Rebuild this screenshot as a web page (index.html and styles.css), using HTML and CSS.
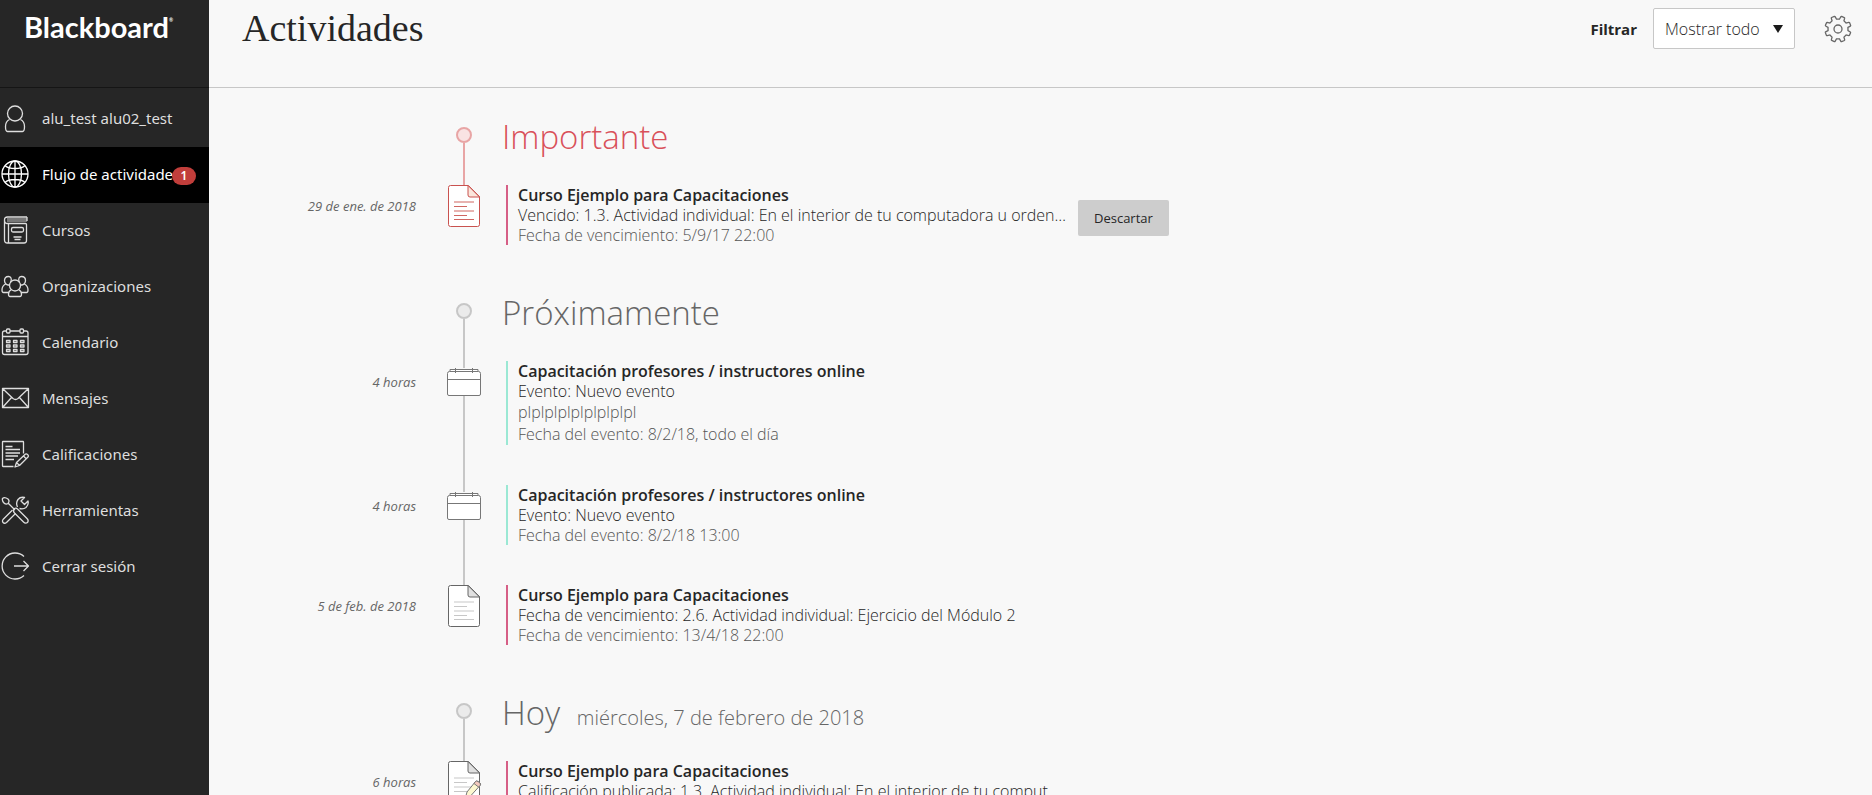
FILE: index.html
```
<!DOCTYPE html>
<html lang="es">
<head>
    <meta charset="utf-8">
    <meta name="viewport" content="width=device-width, initial-scale=1">
    <title>Actividades - Blackboard</title>
    <link rel="stylesheet" href="styles.css">
</head>
<body>
    <!-- Shared timeline icons -->
    <svg class="sprite" aria-hidden="true">
        <symbol id="icon-document" viewBox="0 0 32 42">
            <path class="paper" d="M2.5.5H20.500L31.500 11.500V39.500a2 2 0 0 1-2 2H2.500a2 2 0 0 1-2-2V2.500a2 2 0 0 1 2-2z"/>
            <path class="fold" d="M20 .500V10a2 2 0 0 0 2 2H31.500z"/>
            <path class="lines" d="M6 17H26M6 21.500H19M6 26H26M6 30.500H19M6 34.500H26"/>
        </symbol>
        <symbol id="icon-event" viewBox="0 0 34 28">
            <path class="paper" d="M3 1.500H31V3.500H3z"/>
            <path class="paper" d="M2.500 3.500H31.500a2 2 0 0 1 2 2V26a1.500 1.500 0 0 1-1.500 1.500H2A1.500 1.500 0 0 1 .500 26V5.500a2 2 0 0 1 2-2z"/>
            <path class="outline" d="M.500 11.500H33.500M8.500 0V5M25.500 0V5"/>
        </symbol>
    </svg>

    <div class="app">
        <aside class="sidebar">
            <div class="logo">Blackboard<sup>®</sup></div>
            <nav>
                <ul class="menu">
                    <li>
                        <a href="#" class="menu-item">
                            <svg class="menu-icon" viewBox="0 0 28 28"><circle cx="14" cy="9.500" r="7.500"/><path d="M8.500 15.500C5.500 17 4.500 19.500 4.500 22.500C4.500 25.500 5 27.500 6.500 27.500H21.500C23 27.500 23.500 25.500 23.500 22.500C23.500 19.500 22.500 17 19.500 15.500"/></svg>
                            <span>alu_test alu02_test</span>
                        </a>
                    </li>
                    <li>
                        <a href="#" class="menu-item active">
                            <svg class="menu-icon" viewBox="0 0 28 28"><circle cx="14" cy="14" r="13"/><ellipse cx="14" cy="14" rx="6.500" ry="13"/><path d="M14 1V27M1 14H27M4 5.500C6.500 8 10 8.500 14 8.500S21.500 8 24 5.500M4 22.500C6.500 20 10 19.500 14 19.500S21.500 20 24 22.500"/></svg>
                            <span>Flujo de actividades</span>
                            <span class="badge">1</span>
                        </a>
                    </li>
                    <li>
                        <a href="#" class="menu-item">
                            <svg class="menu-icon" viewBox="0 0 28 28"><path d="M26 1H6.500C4.500 1 3.500 2.200 3.500 4S4.500 7.500 6.500 7.500H24.500Q25.500 7.500 25.500 8.500V24.500Q25.500 27 23 27H6.500Q3.500 27 3.500 24V4M7.500 7.500V27M26 1V5"/><path d="M6 3H26M6 5H26" opacity=".6"/><rect x="10.500" y="11.500" width="12" height="4.500" rx="1.500"/><path d="M12.500 21H20.500M13.500 23.500H19.500"/></svg>
                            <span>Cursos</span>
                        </a>
                    </li>
                    <li>
                        <a href="#" class="menu-item">
                            <svg class="menu-icon" viewBox="0 0 28 28"><circle cx="14" cy="13.500" r="5.500"/><path d="M10.500 17.500Q7.500 19 7.500 22Q7.500 24.500 9 24.500H19Q20.500 24.500 20.500 22Q20.500 19 17.500 17.500M9.500 10.500C11.500 6.500 9.500 4.500 7.500 4.500C4.500 4.500 3.500 6.500 3.500 8.500C3.500 11 5.500 13 7 13H8.500M18.500 10.500C16.500 6.500 18.500 4.500 20.500 4.500C23.500 4.500 24.500 6.500 24.500 8.500C24.500 11 22.500 13 21 13H19.500M4.500 12Q1 14 1 18Q1 20.500 2.500 20.500H7.500M23.500 12Q27 14 27 18Q27 20.500 25.500 20.500H20.500"/></svg>
                            <span>Organizaciones</span>
                        </a>
                    </li>
                    <li>
                        <a href="#" class="menu-item">
                            <svg class="menu-icon" viewBox="0 0 28 28"><path d="M5.500 3H3.500Q1.500 3 1.500 5V24.500Q1.500 26.500 3.500 26.500H25Q27 26.500 27 24.500V5Q27 3 25 3H22.500M9 3H19M1.500 8.500H27"/><rect x="5.500" y="1" width="3.500" height="4" rx="1"/><rect x="19" y="1" width="3.500" height="4" rx="1"/><path d="M5.500 12.500H9V14.500H5.500zM12.500 12.500H16V14.500H12.500zM19.500 12.500H23V14.500H19.500zM5.500 17H9V19H5.500zM12.500 17H16V19H12.500zM19.500 17H23V19H19.500zM5.500 21.500H9V23.500H5.500zM12.500 21.500H16V23.500H12.500zM19.500 21.500H23V23.500H19.500z"/></svg>
                            <span>Calendario</span>
                        </a>
                    </li>
                    <li>
                        <a href="#" class="menu-item">
                            <svg class="menu-icon" viewBox="0 0 28 28"><path d="M1.500 4.500H27.500V23.500H1.500zM2 5L12 14.500Q14.500 16.500 17 14.500L27 5M2 23L10.500 13.500M27 23L18.500 13.500"/></svg>
                            <span>Mensajes</span>
                        </a>
                    </li>
                    <li>
                        <a href="#" class="menu-item">
                            <svg class="menu-icon" viewBox="0 0 28 28"><path d="M22.500 13.500V2Q22.500 1.500 22 1.500H2Q1.500 1.500 1.500 2V26Q1.500 26.500 2 26.500H12.500M4.500 6.500H11.500M4.500 9.500H19M4.500 13H19M4.500 16H17M4.500 19.500H13"/><path d="M14 27L15.500 22.500L24.500 14Q25.500 13.500 26.500 14.500L27 15Q28 16 27 17L18.500 25.500zM15.500 22.500L18.500 25.500M22.500 16L25 18.500"/></svg>
                            <span>Calificaciones</span>
                        </a>
                    </li>
                    <li>
                        <a href="#" class="menu-item">
                            <svg class="menu-icon" viewBox="0 0 28 28"><path d="M1.500 2.500Q3.500 .500 7 3Q9 5 7 7.500Q4.500 9 2.500 6.500Q1 4.500 1.500 2.500zM7.500 7.500L14 14M11.500 14L2 23.500Q1 25 2 26.500Q3.500 28 5.500 26.500L14.500 17.500"/><path d="M13.500 12.500Q15 11.500 16.500 13L26 22.500Q28 24.500 26.500 26.500Q24.500 28 22.500 26L13.500 17Q11.500 15 13.500 12.500zM16.500 11Q14.500 7 17 3.500Q19.500 .500 23.500 1.500L20 5L23.500 8.500L27 5Q28 8.500 25 11.500Q22.500 13.500 18.500 12.500"/></svg>
                            <span>Herramientas</span>
                        </a>
                    </li>
                    <li>
                        <a href="#" class="menu-item">
                            <svg class="menu-icon" viewBox="0 0 28 28"><path d="M23 4.500A13 13 0 1 0 23 23.500M13 14H27.500M22.500 9L27.500 14L22.500 19"/></svg>
                            <span>Cerrar sesión</span>
                        </a>
                    </li>
                </ul>
            </nav>
        </aside>

        <div class="page">
            <header class="page-header">
                <h1>Actividades</h1>
                <div class="filter">
                    <label for="filter">Filtrar</label>
                    <div class="select">
                        <select id="filter">
                            <option>Mostrar todo</option>
                        </select>
                    </div>
                    <button type="button" class="settings" aria-label="Configuración">
                        <svg viewBox="0 0 28 28"><circle cx="14" cy="14" r="4"/><path d="M11.600 4.200L12 1.500Q12.100 1 12.600 1H15.400Q15.900 1 16 1.500L16.400 4.200L19.200 5.400L21.400 3.700Q21.800 3.400 22.200 3.700L24.300 5.800Q24.600 6.200 24.300 6.600L22.600 8.800L23.800 11.600L26.500 12Q27 12.100 27 12.600V15.400Q27 15.900 26.500 16L23.800 16.400L22.600 19.200L24.300 21.400Q24.600 21.800 24.300 22.200L22.200 24.300Q21.800 24.600 21.400 24.300L19.200 22.600L16.400 23.800L16 26.500Q15.900 27 15.400 27H12.600Q12.100 27 12 26.500L11.600 23.800L8.800 22.600L6.600 24.300Q6.200 24.600 5.800 24.300L3.700 22.200Q3.400 21.800 3.700 21.400L5.400 19.200L4.200 16.400L1.500 16Q1 15.900 1 15.400V12.600Q1 12.100 1.500 12L4.200 11.600L5.400 8.800L3.700 6.600Q3.400 6.200 3.700 5.800L5.800 3.700Q6.200 3.400 6.600 3.700L8.800 5.400z" transform="rotate(22.500 14 14)"/></svg>
                    </button>
                </div>
            </header>

            <main class="timeline">
                <section class="group important">
                    <div class="row group-head">
                        <div class="marker"><span class="dot"></span><span class="line"></span></div>
                        <h2>Importante</h2>
                    </div>
                    <article class="row">
                        <time class="date">29 de ene. de 2018</time>
                        <div class="marker"><svg class="icon-document"><use href="#icon-document"/></svg></div>
                        <div class="entry">
                            <div class="card">
                                <h3>Curso Ejemplo para Capacitaciones</h3>
                                <p>Vencido: 1.3. Actividad individual: En el interior de tu computadora u orden…</p>
                                <p class="detail">Fecha de vencimiento: 5/9/17 22:00</p>
                            </div>
                            <button type="button" class="dismiss">Descartar</button>
                        </div>
                    </article>
                </section>

                <section class="group">
                    <div class="row group-head">
                        <div class="marker"><span class="dot"></span><span class="line"></span></div>
                        <h2>Próximamente</h2>
                    </div>
                    <article class="row">
                        <time class="date">4 horas</time>
                        <div class="marker"><span class="line stub"></span><svg class="icon-event"><use href="#icon-event"/></svg><span class="line"></span></div>
                        <div class="entry">
                            <div class="card event">
                                <h3>Capacitación profesores / instructores online</h3>
                                <p>Evento: Nuevo evento</p>
                                <div class="more">
                                    <p class="detail">plplplplplplplplpl</p>
                                    <p class="detail">Fecha del evento: 8/2/18, todo el día</p>
                                </div>
                            </div>
                        </div>
                    </article>
                    <article class="row">
                        <time class="date">4 horas</time>
                        <div class="marker"><span class="line stub"></span><svg class="icon-event"><use href="#icon-event"/></svg><span class="line"></span></div>
                        <div class="entry">
                            <div class="card event">
                                <h3>Capacitación profesores / instructores online</h3>
                                <p>Evento: Nuevo evento</p>
                                <p class="detail">Fecha del evento: 8/2/18 13:00</p>
                            </div>
                        </div>
                    </article>
                    <article class="row">
                        <time class="date">5 de feb. de 2018</time>
                        <div class="marker"><svg class="icon-document"><use href="#icon-document"/></svg></div>
                        <div class="entry">
                            <div class="card">
                                <h3>Curso Ejemplo para Capacitaciones</h3>
                                <p>Fecha de vencimiento: 2.6. Actividad individual: Ejercicio del Módulo 2</p>
                                <p class="detail">Fecha de vencimiento: 13/4/18 22:00</p>
                            </div>
                        </div>
                    </article>
                </section>

                <section class="group">
                    <div class="row group-head">
                        <div class="marker"><span class="dot"></span><span class="line"></span></div>
                        <h2>Hoy <small>miércoles, 7 de febrero de 2018</small></h2>
                    </div>
                    <article class="row">
                        <time class="date">6 horas</time>
                        <div class="marker">
                            <svg class="icon-document" viewBox="0 0 32 42">
                                <use href="#icon-document" width="32" height="42"/>
                                <path class="pencil" d="M17.500 36.500L19 31L27.500 20.500Q28.500 19.500 30 20.500L32 22Q33 23 32 24.500L23 34.500z"/>
                                <path class="eraser" d="M26 22.500L27.500 20.500Q28.500 19.500 30 20.500L32 22Q33 23 32 24.500L30.500 26z"/>
                            </svg>
                        </div>
                        <div class="entry">
                            <div class="card">
                                <h3>Curso Ejemplo para Capacitaciones</h3>
                                <p>Calificación publicada: 1.3. Actividad individual: En el interior de tu comput…</p>
                            </div>
                        </div>
                    </article>
                </section>
            </main>
        </div>
    </div>
</body>
</html>
```
FILE: styles.css
```
* {
    margin: 0;
    padding: 0;
    box-sizing: border-box;
}

body {
    font-family: "Open Sans", "Noto Sans", sans-serif;
    font-size: 16px;
    line-height: 20px;
    color: #262626;
    background: #f8f8f8;
}

.sprite {
    display: none;
}

.app {
    display: flex;
    height: 100vh;
    overflow: hidden;
}

/* Sidebar */
.sidebar {
    flex: 0 0 209px;
    background: #262626;
    overflow: hidden;
}

.logo {
    height: 88px;
    padding: 9px 0 0 24px;
    border-bottom: 1px solid #151515;
    font-family: Lato, sans-serif;
    font-size: 29px;
    font-weight: 700;
    line-height: 36px;
    color: #fff;
}

.logo sup {
    font-size: 5px;
    line-height: 5px;
    vertical-align: 16px;
}

.menu {
    list-style: none;
    padding-top: 3px;
}

.menu-item {
    position: relative;
    display: flex;
    align-items: center;
    gap: 13px;
    height: 56px;
    padding: 0 0 2px 1px;
    font-family: "Noto Sans", "Open Sans", sans-serif;
    font-size: 15px;
    color: #dedede;
    text-decoration: none;
    white-space: nowrap;
}

.menu-item:hover,
.menu-item.active {
    background: #000;
    color: #fff;
}

.menu-icon {
    flex: none;
    width: 28px;
    height: 28px;
    fill: none;
    stroke: currentColor;
    stroke-width: 1.3;
    stroke-linejoin: round;
    overflow: visible;
}

.badge {
    position: absolute;
    top: 20px;
    right: 13px;
    width: 24px;
    height: 18px;
    border-radius: 9px;
    background: #c13e3b;
    color: #fff;
    font-size: 12px;
    font-weight: 600;
    line-height: 18px;
    text-align: center;
}

/* Header */
.page {
    flex: 1;
    min-width: 0;
    display: flex;
    flex-direction: column;
}

.page-header {
    flex: none;
    display: flex;
    justify-content: space-between;
    height: 88px;
    padding: 8px 20px 0 33px;
    border-bottom: 1px solid #c7c7c7;
}

h1 {
    font-family: "Liberation Serif", serif;
    font-size: 38px;
    font-weight: 400;
    line-height: 40px;
}

.filter {
    display: flex;
    align-items: center;
    height: 41px;
}

.filter label {
    margin-right: 16px;
    font-size: 15px;
    font-weight: 700;
}

.select {
    position: relative;
    margin-right: 29px;
}

.select::after {
    content: "";
    position: absolute;
    top: 17px;
    right: 12px;
    border: 5px solid transparent;
    border-top: 8px solid #1a1a1a;
    border-bottom: 0;
    pointer-events: none;
}

select {
    appearance: none;
    width: 142px;
    height: 41px;
    padding: 0 28px 0 11px;
    border: 1px solid #c7c7c7;
    border-radius: 2px;
    background: #fff;
    color: #262626;
    font-family: inherit;
    font-size: 16px;
    font-weight: 300;
}

.settings {
    width: 28px;
    height: 28px;
    border: 0;
    background: none;
    cursor: pointer;
}

.settings svg {
    display: block;
    fill: none;
    stroke: #666;
    stroke-width: 1.3;
}

/* Timeline */
.timeline {
    flex: 1;
    min-height: 0;
    padding-top: 26px;
    overflow: hidden;
}

.group {
    padding-bottom: 5px;
}

.row {
    display: grid;
    grid-template-columns: 237px 36px minmax(0, 1fr);
}

.marker {
    grid-column: 2;
    display: flex;
    flex-direction: column;
    align-items: center;
}

.marker svg {
    flex: none;
    overflow: visible;
}

.date {
    padding-right: 30px;
    font-size: 13px;
    font-style: italic;
    line-height: 42px;
    text-align: right;
    color: #666;
}

.line {
    flex: 1;
    width: 2px;
    background: #c7c7c7;
}

.line.stub {
    flex: 0 0 7px;
}

.dot {
    flex: none;
    width: 16px;
    height: 16px;
    margin-top: 13px;
    border: 2px solid #c7c7c7;
    border-radius: 50%;
    background: #ebebeb;
}

.group-head {
    height: 71px;
}

h2 {
    padding-left: 20px;
    font-size: 33px;
    font-weight: 300;
    line-height: 45px;
    color: #666;
}

h2 small {
    margin-left: 8px;
    font-size: 20px;
}

.entry {
    display: flex;
    align-items: flex-start;
    gap: 12px;
    padding: 0 0 40px 24px;
}

.card {
    min-height: 60px;
    padding-left: 10px;
    border-left: 2px solid #d65f86;
    font-weight: 300;
    white-space: nowrap;
}

.card.event {
    border-color: #9be8d4;
}

.card .detail {
    color: #555;
}

.more {
    line-height: 22px;
}

h3 {
    font-size: 16px;
    font-weight: 600;
}

.dismiss {
    flex: none;
    height: 36px;
    margin-top: 15px;
    padding: 0 16px;
    border: 0;
    border-radius: 2px;
    background: #cdcdcd;
    color: #262626;
    font-family: inherit;
    font-size: 13px;
    cursor: pointer;
}

/* Timeline icons */
.icon-document {
    width: 32px;
    height: 42px;
    color: #666;
    --fold: #e0e0e0;
    --lines: #c7c7c7;
}

.icon-event {
    width: 34px;
    height: 28px;
    color: #777;
}

.paper {
    fill: #fff;
    stroke: currentColor;
}

.fold {
    fill: var(--fold);
    stroke: currentColor;
}

.lines {
    stroke: var(--lines);
}

.outline {
    fill: none;
    stroke: currentColor;
}

.pencil {
    fill: #fdf8cf;
    stroke: #777;
}

.eraser {
    fill: #f3c9bd;
    stroke: #777;
}

.important h2 {
    color: #d9505a;
}

.important .line {
    background: #e8a5a5;
}

.important .dot {
    border-color: #e8a5a5;
    background: #f9e3e3;
}

.important .icon-document {
    color: #c9524f;
    --fold: #fbe6dc;
    --lines: #cf6661;
}
```
